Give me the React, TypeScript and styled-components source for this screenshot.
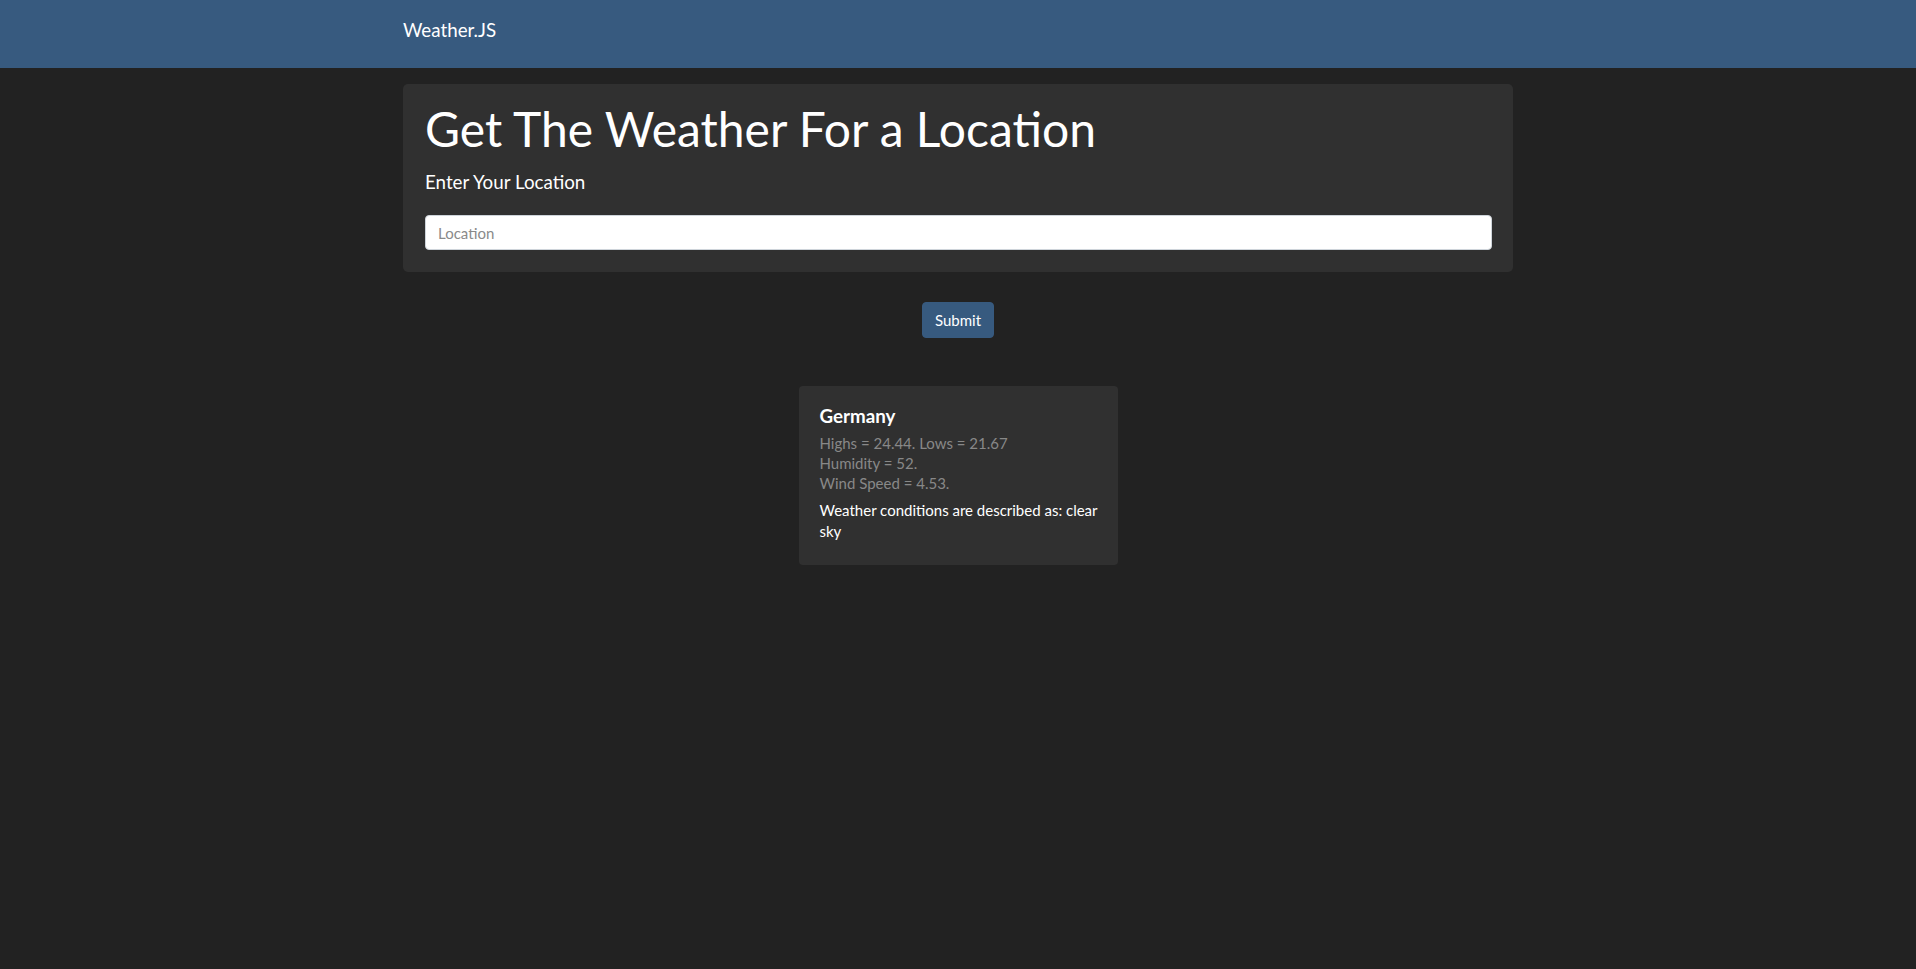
import React from "react";
import styled, { createGlobalStyle } from "styled-components";

const GlobalStyle = createGlobalStyle`
  html, body {
    margin: 0;
    padding: 0;
    background: #222222;
    color: #ffffff;
    font-family: Lato, "Open Sans", sans-serif;
    font-size: 15px;
    line-height: 1.5;
  }
  * { box-sizing: border-box; }
`;

const Navbar = styled.nav`
  height: 68px;
  background: #375a7f;
  padding-top: 16px;
`;

const Container = styled.div`
  width: 1110px;
  margin: 0 auto;
`;

const Brand = styled.a`
  display: block;
  width: max-content;
  font-size: 18.75px;
  line-height: 1.5;
  color: #ffffff;
  text-decoration: none;
`;

const Main = styled(Container)`
  display: flex;
  flex-direction: column;
  align-items: center;
  padding-top: 16px;
`;

const Jumbotron = styled.section`
  width: 100%;
  background: #303030;
  border-radius: 5px;
  padding: 16px 21px 22px 22px;
`;

const Title = styled.h1`
  margin: 0;
  font-size: 48px;
  font-weight: 400;
  line-height: 1.2;
`;

const Label = styled.h5`
  margin: 13px 0 0;
  font-size: 18.75px;
  font-weight: 400;
  line-height: 1.2;
`;

const Input = styled.input`
  display: block;
  width: 100%;
  height: 35px;
  margin-top: 22px;
  padding: 0 12px;
  border: 1px solid #ced4da;
  border-radius: 4px;
  background: #ffffff;
  color: #444444;
  font-family: Lato, sans-serif;
  font-size: 15px;
  outline: none;
  &::placeholder {
    color: #8a8a8a;
  }
`;

const Button = styled.button`
  margin-top: 30px;
  height: 35.5px;
  padding: 0 12px;
  border: 1px solid #375a7f;
  border-radius: 4px;
  background: #375a7f;
  color: #ffffff;
  font-family: Lato, sans-serif;
  font-size: 15px;
  cursor: pointer;
`;

const Card = styled.div`
  margin-top: 48.5px;
  width: 319px;
  height: 179px;
  background: #303030;
  border-radius: 4px;
  padding: 19px 14px 20px 21px;
`;

const CardTitle = styled.h5`
  margin: 0;
  font-size: 18.75px;
  font-weight: 700;
  line-height: 1.2;
`;

const Muted = styled.div`
  margin-top: 5px;
  color: #888888;
  font-size: 15px;
  line-height: 20px;
`;

const CardText = styled.p`
  margin: 7px 0 0;
  font-size: 15px;
  line-height: 21.5px;
`;

export default function App() {
  return (
    <>
      <GlobalStyle />
      <Navbar>
        <Container>
          <Brand href="#">Weather.JS</Brand>
        </Container>
      </Navbar>
      <Main>
        <Jumbotron>
          <Title>Get The Weather For a Location</Title>
          <Label>Enter Your Location</Label>
          <Input type="text" placeholder="Location" />
        </Jumbotron>
        <Button type="button">Submit</Button>
        <Card>
          <CardTitle>Germany</CardTitle>
          <Muted>
            Highs = 24.44. Lows = 21.67
            <br />
            Humidity = 52.
            <br />
            Wind Speed = 4.53.
          </Muted>
          <CardText>Weather conditions are described as: clear sky</CardText>
        </Card>
      </Main>
    </>
  );
}
